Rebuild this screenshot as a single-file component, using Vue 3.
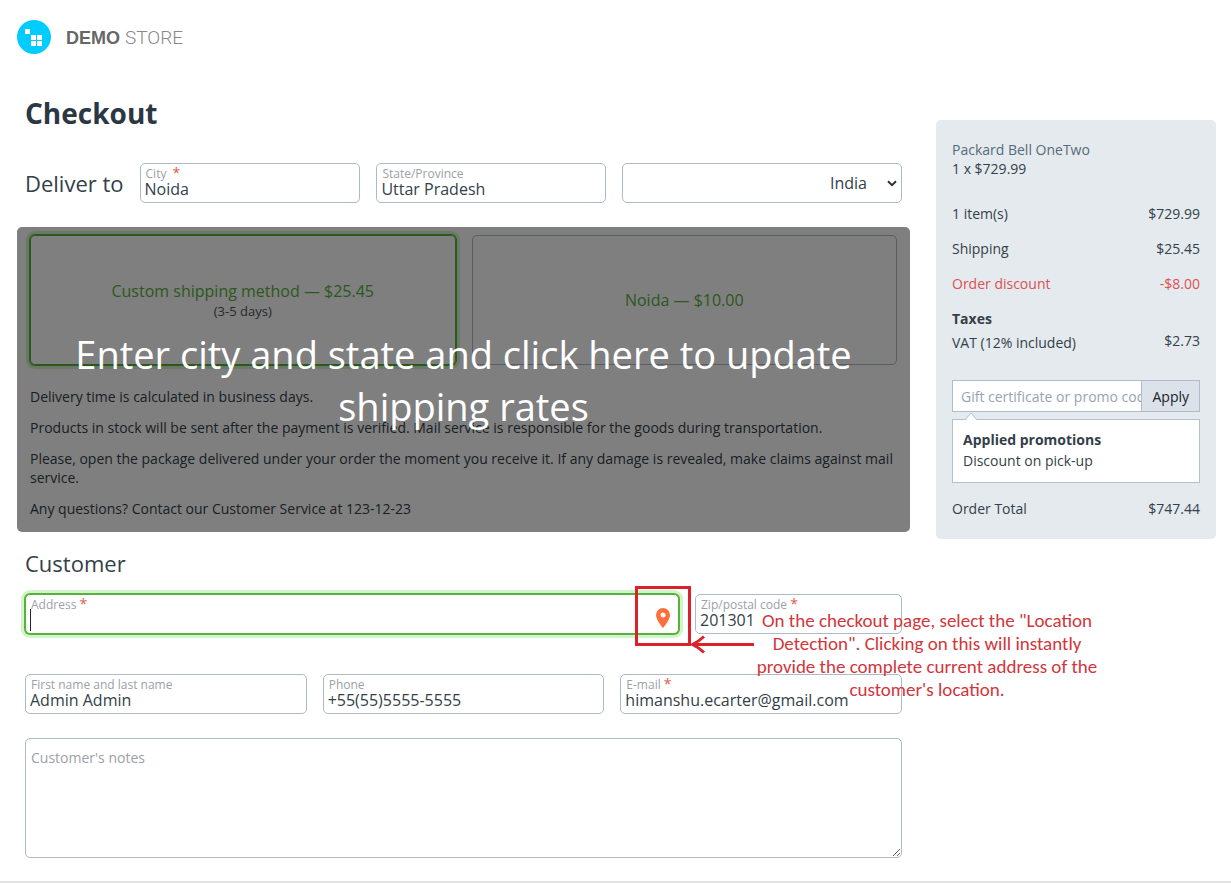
<script setup>
import { ref } from 'vue'

const city = ref('Noida')
const region = ref('Uttar Pradesh')
const country = ref('India')
const address = ref('')
const zip = ref('201301')
const fullName = ref('Admin Admin')
const phone = ref('+55(55)5555-5555')
const email = ref('himanshu.ecarter@gmail.com')
const notes = ref('')
const promo = ref('')

const shipping = ref('custom')
const methods = [
  { id: 'custom', title: 'Custom shipping method — $25.45', time: '(3-5 days)' },
  { id: 'noida', title: 'Noida — $10.00', time: '' }
]
</script>

<template>
  <div class="page">
    <header class="header">
      <a class="logo" href="#">
        <svg class="logo-mark" viewBox="0 0 34 34" aria-hidden="true">
          <circle cx="17" cy="17" r="17" fill="#00ccff" />
          <g fill="#fff">
            <rect x="8" y="9" width="5" height="5" />
            <rect x="14" y="15" width="5" height="5" />
            <rect x="20" y="15" width="5" height="5" />
            <rect x="14" y="21" width="5" height="5" />
            <rect x="20" y="21" width="5" height="5" />
          </g>
        </svg>
        <span class="logo-text"><b>DEMO</b> <span>STORE</span></span>
      </a>
    </header>

    <div class="layout">
      <main class="main">
        <h1>Checkout</h1>

        <section class="deliver">
          <h2>Deliver to</h2>
          <div class="field">
            <label for="city">City <i class="req spaced">*</i></label>
            <input id="city" v-model="city" type="text" />
          </div>
          <div class="field">
            <label for="region">State/Province</label>
            <input id="region" v-model="region" type="text" />
          </div>
          <div class="select">
            <select v-model="country" aria-label="Country">
              <option>India</option>
            </select>
            <svg viewBox="0 0 10 7" aria-hidden="true">
              <path d="M1 1.2 5 5.2 9 1.2" fill="none" stroke="#2b333b" stroke-width="2" />
            </svg>
          </div>
        </section>

        <section class="shipping">
          <div class="methods">
            <label v-for="m in methods" :key="m.id" class="method" :class="{ selected: shipping === m.id }">
              <input v-model="shipping" type="radio" name="shipping" :value="m.id" />
              <span class="method-title">{{ m.title }}</span>
              <span v-if="m.time" class="method-time">{{ m.time }}</span>
            </label>
          </div>
          <p>Delivery time is calculated in business days.</p>
          <p>Products in stock will be sent after the payment is verified. Mail service is responsible for the goods during transportation.</p>
          <p>Please, open the package delivered under your order the moment you receive it. If any damage is revealed, make claims against mail service.</p>
          <p>Any questions? Contact our Customer Service at 123-12-23</p>
          <button class="shade" type="button">Enter city and state and click here to update shipping rates</button>
        </section>

        <section class="customer">
          <h2>Customer</h2>
          <div class="row address-row">
            <div class="field active">
              <label for="address">Address <i class="req">*</i></label>
              <input id="address" v-model="address" type="text" />
              <span class="caret"></span>
              <button class="locate" type="button" aria-label="Detect location">
                <svg viewBox="0 0 14 20" aria-hidden="true">
                  <path fill="#ff6f3c" fill-rule="evenodd" d="M7 0a7 7 0 0 0-7 7c0 5.2 7 13 7 13s7-7.800 7-13a7 7 0 0 0-7-7Zm0 4.500a2.500 2.500 0 1 1 0 5 2.500 2.500 0 0 1 0-5Z" />
                </svg>
              </button>
            </div>
            <div class="field">
              <label for="zip">Zip/postal code <i class="req">*</i></label>
              <input id="zip" v-model="zip" type="text" />
            </div>
            <div class="callout">
              <svg viewBox="0 0 120 70" aria-hidden="true">
                <g fill="none" stroke="#d9222a" stroke-width="3">
                  <rect x="1.500" y="1.500" width="53" height="57" />
                  <path d="M119 58.500H57M69 50.500Q63 56 57.500 58.500Q63 61 69 66.500" />
                </g>
              </svg>
              <p>On the checkout page, select the "Location Detection". Clicking on this will instantly provide the complete current address of the customer's location.</p>
            </div>
          </div>

          <div class="row thirds">
            <div class="field">
              <label for="name">First name and last name</label>
              <input id="name" v-model="fullName" type="text" />
            </div>
            <div class="field">
              <label for="phone">Phone</label>
              <input id="phone" v-model="phone" type="tel" />
            </div>
            <div class="field">
              <label for="email">E-mail <i class="req">*</i></label>
              <input id="email" v-model="email" type="email" />
            </div>
          </div>

          <textarea v-model="notes" class="notes" placeholder="Customer's notes" aria-label="Customer's notes"></textarea>
        </section>
      </main>

      <aside class="summary">
        <a class="product" href="#">Packard Bell OneTwo</a>
        <div class="qty">1 x $729.99</div>
        <dl>
          <div><dt>1 item(s)</dt><dd>$729.99</dd></div>
          <div><dt>Shipping</dt><dd>$25.45</dd></div>
          <div class="discount"><dt>Order discount</dt><dd>-$8.00</dd></div>
          <div class="taxes"><dt>Taxes</dt></div>
          <div class="vat"><dt>VAT (12% included)</dt><dd>$2.73</dd></div>
        </dl>
        <form class="coupon" @submit.prevent>
          <input v-model="promo" type="text" placeholder="Gift certificate or promo code" aria-label="Gift certificate or promo code" />
          <button type="submit">Apply</button>
        </form>
        <div class="promotions">
          <svg viewBox="0 0 14 8" aria-hidden="true">
            <path d="M1 8 7 1l6 7" fill="#fff" stroke="#b4c0cb" />
          </svg>
          <strong>Applied promotions</strong>
          <span>Discount on pick-up</span>
        </div>
        <div class="total"><span>Order Total</span><span>$747.44</span></div>
      </aside>
    </div>
    <footer class="footer"></footer>
  </div>
</template>

<style>
body {
  margin: 0;
  background: #fff;
}
</style>

<style scoped>
.page {
  font-family: "Open Sans", "Noto Sans", sans-serif;
  font-size: 14px;
  line-height: 19px;
  color: #333f49;
}
.page * {
  box-sizing: border-box;
}
h1, h2, p, dl, dd {
  margin: 0;
}
input, select, textarea, button {
  font-family: inherit;
  color: inherit;
}
.header {
  padding: 20px 17px 0;
}
.logo {
  display: inline-flex;
  align-items: center;
  gap: 15px;
  text-decoration: none;
  vertical-align: top;
}
.logo-mark {
  width: 34px;
  height: 34px;
}
.logo-text {
  padding-top: 2px;
  font-family: "Liberation Sans", Arial, sans-serif;
  font-size: 18px;
  color: #666;
}
.logo-text span {
  font-family: Roboto, sans-serif;
  font-size: 19px;
  font-weight: 300;
  color: #888;
}
.layout {
  display: grid;
  grid-template-columns: minmax(0, 1fr) 280px;
  gap: 34px;
  align-items: start;
  padding: 40px 15px 0 25px;
}
h1 {
  font-size: 28px;
  line-height: 38px;
  font-weight: 700;
  color: #2b3743;
}
h2 {
  font-size: 22px;
  line-height: 30px;
  font-weight: 400;
}
.deliver {
  display: grid;
  grid-template-columns: auto 221fr 230fr 280fr;
  align-items: center;
  gap: 16px;
  margin-top: 31px;
}
.field {
  position: relative;
  min-width: 0;
  height: 40px;
  padding-top: 3px;
  border: 1px solid #aebac6;
  border-radius: 5px;
  background: #fff;
}
.field label {
  display: block;
  padding: 0 5px;
  font-size: 12px;
  line-height: 14px;
  color: #9ba1a7;
}
.req {
  font-style: normal;
  font-size: 14px;
  line-height: 0;
  color: #dd5c4c;
}
.req.spaced {
  margin-left: 3px;
}
.field input {
  display: block;
  width: 100%;
  height: 20px;
  margin-top: -2px;
  padding: 0 4px;
  border: 0;
  outline: 0;
  background: transparent;
  font-size: 16px;
}
.select {
  position: relative;
}
.select select {
  display: block;
  width: 100%;
  height: 40px;
  padding: 0 34px 0 8px;
  border: 1px solid #aebac6;
  border-radius: 5px;
  background: #fff;
  font-size: 16px;
  text-align: right;
  text-align-last: right;
  appearance: none;
}
.select svg {
  position: absolute;
  right: 5px;
  top: 17px;
  width: 10px;
  height: 7px;
  pointer-events: none;
}
.shipping {
  position: relative;
  margin: 24px -8px 0;
  padding: 8px 13px 14px;
}
.methods {
  display: grid;
  grid-template-columns: 1fr 1fr;
  gap: 16px;
  margin-bottom: 22px;
}
.method {
  display: flex;
  flex-direction: column;
  align-items: center;
  justify-content: center;
  height: 130px;
  border: 1px solid #aebac6;
  border-radius: 5px;
}
.method input {
  position: absolute;
  opacity: 0;
}
.method-title {
  font-size: 16px;
  line-height: 22px;
  color: #59b13e;
}
.method-time {
  font-size: 13px;
  line-height: 18px;
  color: #4a5258;
}
.method.selected,
.field.active {
  border-color: #55b23a;
  box-shadow: 0 0 0 1px #55b23a, 0 0 0 4px #d3f3ca;
}
.shipping p {
  padding-bottom: 12px;
}
.shipping p:last-of-type {
  padding-bottom: 0;
}
.shade {
  position: absolute;
  inset: 0;
  width: 100%;
  padding: 0 40px;
  border: 0;
  border-radius: 5px;
  background: rgba(0, 0, 0, 0.5);
  color: #fff;
  font-size: 38px;
  line-height: 52px;
}
.customer {
  margin-top: 16px;
}
.row {
  display: grid;
  gap: 16px;
}
.address-row {
  position: relative;
  z-index: 1;
  grid-template-columns: 654fr 207fr;
  margin-top: 16px;
}
.thirds {
  grid-template-columns: repeat(3, 1fr);
  margin-top: 40px;
}
.caret {
  position: absolute;
  left: 4px;
  top: 14px;
  width: 1px;
  height: 22px;
  background: #20252a;
}
.locate {
  position: absolute;
  right: 8px;
  top: 13px;
  width: 14px;
  height: 20px;
  padding: 0;
  border: 0;
  background: none;
}
.locate svg {
  display: block;
  width: 14px;
  height: 20px;
}
.callout {
  position: absolute;
  top: -8px;
  right: -196px;
  width: 463px;
  pointer-events: none;
}
.callout svg {
  display: block;
  width: 120px;
  height: 70px;
}
.callout p {
  position: absolute;
  top: 23px;
  right: 0;
  width: 342px;
  font-family: Carlito, Calibri, Lato, sans-serif;
  font-size: 19px;
  line-height: 23px;
  text-align: center;
  color: #d1363c;
}
.notes {
  display: block;
  width: 100%;
  height: 120px;
  margin-top: 24px;
  padding: 9px 5px;
  border: 1px solid #aebac6;
  border-radius: 5px;
  outline: 0;
  background: #fff;
  font-size: 14px;
  line-height: 19px;
}
.notes::placeholder {
  color: #9ba1a7;
}
.summary {
  margin-top: 26px;
  padding: 20px 16px 21px;
  border-radius: 5px;
  background: #e5eaee;
}
.product {
  display: block;
  color: #566b79;
  text-decoration: none;
}
.summary dl {
  margin-top: 18px;
}
.summary dl div {
  display: flex;
  justify-content: space-between;
  align-items: flex-start;
  padding: 8px 0;
}
.summary dl .discount {
  color: #dc5151;
}
.summary dl .taxes {
  padding-bottom: 3px;
  font-weight: 700;
}
.summary dl .vat {
  padding: 0;
}
.vat dt {
  line-height: 23px;
}
.coupon {
  display: flex;
  height: 32px;
  margin-top: 26px;
}
.coupon input {
  flex: 1;
  min-width: 0;
  padding: 0 0 0 8px;
  border: 1px solid #aebccb;
  border-right: 0;
  border-radius: 0;
  outline: 0;
  background: #fff;
  font-size: 14px;
}
.coupon input::placeholder {
  color: #97a3b3;
}
.coupon button {
  padding: 0 10px;
  border: 1px solid #aebccb;
  background: #dbe2ea;
  color: #1c2226;
  font-size: 14px;
}
.promotions {
  position: relative;
  display: flex;
  flex-direction: column;
  margin-top: 7px;
  padding: 9px 10px 11px;
  border: 1px solid #b4c0cb;
  background: #fff;
  line-height: 21px;
}
.promotions svg {
  position: absolute;
  left: 11px;
  top: -8px;
  width: 14px;
  height: 8px;
}
.total {
  display: flex;
  justify-content: space-between;
  margin-top: 16px;
}
.footer {
  height: 2px;
  margin-top: 23px;
  background: #e3e3e3;
}
</style>
